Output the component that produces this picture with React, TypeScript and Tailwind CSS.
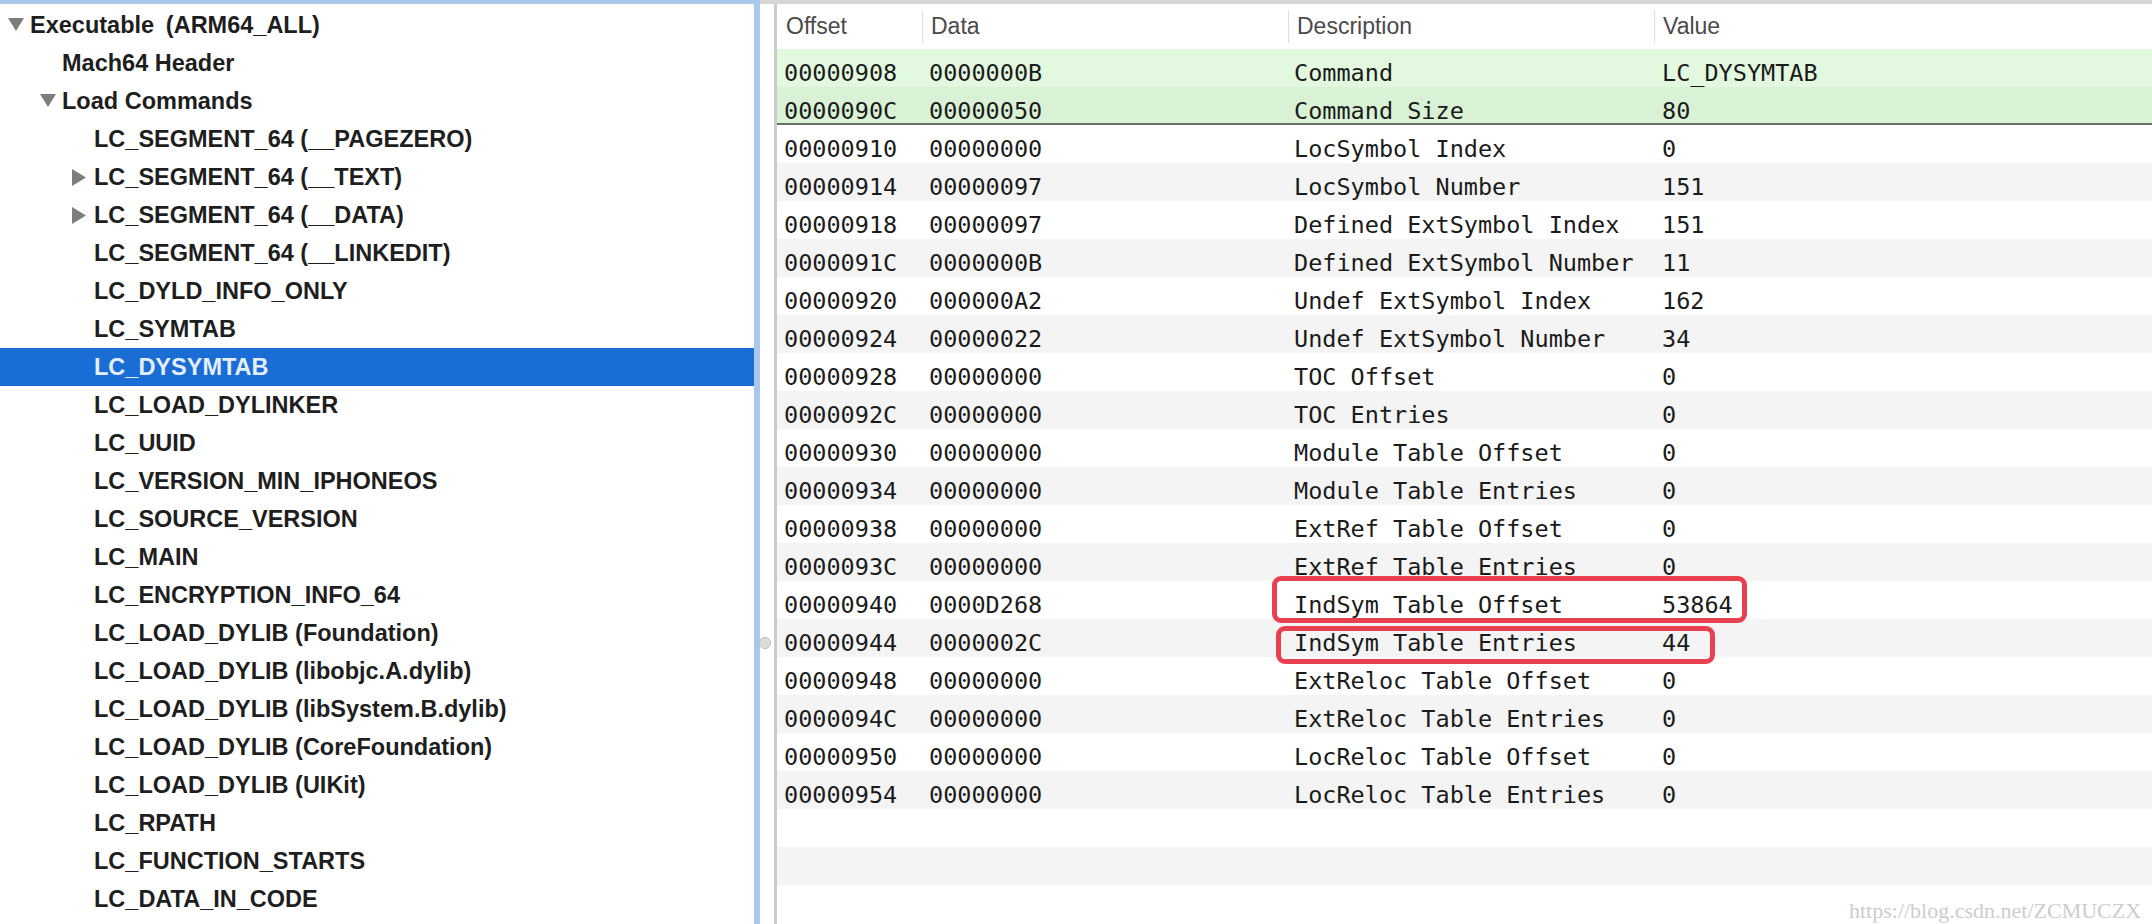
import React from "react";

type TreeItem = {
  label: string;
  level: number;
  arrow?: "down" | "right";
  selected?: boolean;
};

const tree: TreeItem[] = [
  { label: "Executable\u2002(ARM64_ALL)", level: 0, arrow: "down" },
  { label: "Mach64 Header", level: 1 },
  { label: "Load Commands", level: 1, arrow: "down" },
  { label: "LC_SEGMENT_64 (__PAGEZERO)", level: 2 },
  { label: "LC_SEGMENT_64 (__TEXT)", level: 2, arrow: "right" },
  { label: "LC_SEGMENT_64 (__DATA)", level: 2, arrow: "right" },
  { label: "LC_SEGMENT_64 (__LINKEDIT)", level: 2 },
  { label: "LC_DYLD_INFO_ONLY", level: 2 },
  { label: "LC_SYMTAB", level: 2 },
  { label: "LC_DYSYMTAB", level: 2, selected: true },
  { label: "LC_LOAD_DYLINKER", level: 2 },
  { label: "LC_UUID", level: 2 },
  { label: "LC_VERSION_MIN_IPHONEOS", level: 2 },
  { label: "LC_SOURCE_VERSION", level: 2 },
  { label: "LC_MAIN", level: 2 },
  { label: "LC_ENCRYPTION_INFO_64", level: 2 },
  { label: "LC_LOAD_DYLIB (Foundation)", level: 2 },
  { label: "LC_LOAD_DYLIB (libobjc.A.dylib)", level: 2 },
  { label: "LC_LOAD_DYLIB (libSystem.B.dylib)", level: 2 },
  { label: "LC_LOAD_DYLIB (CoreFoundation)", level: 2 },
  { label: "LC_LOAD_DYLIB (UIKit)", level: 2 },
  { label: "LC_RPATH", level: 2 },
  { label: "LC_FUNCTION_STARTS", level: 2 },
  { label: "LC_DATA_IN_CODE", level: 2 },
];

const rows: [string, string, string, string][] = [
  ["00000908", "0000000B", "Command", "LC_DYSYMTAB"],
  ["0000090C", "00000050", "Command Size", "80"],
  ["00000910", "00000000", "LocSymbol Index", "0"],
  ["00000914", "00000097", "LocSymbol Number", "151"],
  ["00000918", "00000097", "Defined ExtSymbol Index", "151"],
  ["0000091C", "0000000B", "Defined ExtSymbol Number", "11"],
  ["00000920", "000000A2", "Undef ExtSymbol Index", "162"],
  ["00000924", "00000022", "Undef ExtSymbol Number", "34"],
  ["00000928", "00000000", "TOC Offset", "0"],
  ["0000092C", "00000000", "TOC Entries", "0"],
  ["00000930", "00000000", "Module Table Offset", "0"],
  ["00000934", "00000000", "Module Table Entries", "0"],
  ["00000938", "00000000", "ExtRef Table Offset", "0"],
  ["0000093C", "00000000", "ExtRef Table Entries", "0"],
  ["00000940", "0000D268", "IndSym Table Offset", "53864"],
  ["00000944", "0000002C", "IndSym Table Entries", "44"],
  ["00000948", "00000000", "ExtReloc Table Offset", "0"],
  ["0000094C", "00000000", "ExtReloc Table Entries", "0"],
  ["00000950", "00000000", "LocReloc Table Offset", "0"],
  ["00000954", "00000000", "LocReloc Table Entries", "0"],
];

const cols = "grid grid-cols-[145px_366px_366px_1fr]";

const Arrow = ({ dir }: { dir: "down" | "right" }) =>
  dir === "down" ? (
    <svg width="16" height="14" viewBox="0 0 16 14">
      <path d="M0 0 L16 0 L8 13 Z" fill="#7d7d7d" />
    </svg>
  ) : (
    <svg width="14" height="17" viewBox="0 0 14 17">
      <path d="M0 0 L14 8.5 L0 17 Z" fill="#7d7d7d" />
    </svg>
  );

const TreeRow = ({ item }: { item: TreeItem }) => (
  <div
    className={`flex h-[38px] items-center ${
      item.selected ? "bg-[#1a6dd5] text-[#e4eeff]" : "text-[#1e1e1e]"
    }`}
    style={{ paddingLeft: item.level * 32 }}
  >
    <div className="flex w-[30px] shrink-0 items-center pl-[8px]">
      {item.arrow && <Arrow dir={item.arrow} />}
    </div>
    <span className="whitespace-nowrap text-[23.5px] font-bold leading-[38px]">
      {item.label}
    </span>
  </div>
);

const rowBg = (i: number) => {
  if (i === 0) return "bg-[#e2f8df]";
  if (i === 1) return "bg-[#d9f2d5] border-b-2 border-[#6e6e6e]";
  return i % 2 === 0 ? "bg-white" : "bg-[#f4f4f4]";
};

export default function App() {
  const filler = [20, 21, 22];

  return (
    <div
      className="relative flex h-[924px] w-[2152px] overflow-hidden bg-white"
      style={{ fontFamily: '"Liberation Sans", Arial, sans-serif' }}
    >
      {/* outline view */}
      <div className="w-[760px] shrink-0 border-t-4 border-r-[6px] border-[#aac8ee] pt-[2px]">
        {tree.map((item) => (
          <TreeRow key={item.label} item={item} />
        ))}
      </div>

      {/* table side */}
      <div className="flex flex-1 border-t-4 border-[#d6d6d6] pl-[14px]">
        <div className="flex-1 border-l-[3px] border-[#cbcbcb]">
          <div className={`${cols} h-[45px] items-center bg-white text-[23px] text-[#4a4a4a]`}>
            <div className="pl-[9px]">Offset</div>
            <div className="border-l border-[#dedede] pl-[8px] leading-[33px]">Data</div>
            <div className="border-l border-[#dedede] pl-[8px] leading-[33px]">Description</div>
            <div className="border-l border-[#dedede] pl-[8px] leading-[33px]">Value</div>
          </div>
          <div
            className="text-[23.5px] text-[#1b1b1b]"
            style={{ fontFamily: '"DejaVu Sans Mono", Menlo, monospace' }}
          >
            {rows.map((r, i) => (
              <div key={r[0]} className={`${cols} box-border h-[38px] ${rowBg(i)}`}>
                <div className="pl-[7px] pt-[10px] leading-[28px]">{r[0]}</div>
                <div className="pl-[7px] pt-[10px] leading-[28px]">{r[1]}</div>
                <div className="pl-[6px] pt-[10px] leading-[28px] whitespace-nowrap">{r[2]}</div>
                <div className="pl-[8px] pt-[10px] leading-[28px]">{r[3]}</div>
              </div>
            ))}
            {filler.map((i) => (
              <div key={i} className={`h-[38px] ${rowBg(i)}`} />
            ))}
          </div>
        </div>
      </div>

      {/* splitter handle */}
      <div className="absolute left-[759px] top-[637px] h-[12px] w-[12px] rounded-full border border-[#bdbdbd] bg-[#dcdcdc]" />

      {/* annotations */}
      <div className="absolute left-[1272px] top-[576px] h-[47px] w-[475px] rounded-[9px] border-[5px] border-[#e8404e]" />
      <div className="absolute left-[1276px] top-[626px] h-[38px] w-[439px] rounded-[9px] border-[5px] border-[#e8404e]" />

      <div
        className="absolute left-[1849px] top-[894px] text-[22px] text-[#cdcdcd]"
        style={{ fontFamily: '"Liberation Serif", serif' }}
      >
        https://blog.csdn.net/ZCMUCZX
      </div>
    </div>
  );
}
